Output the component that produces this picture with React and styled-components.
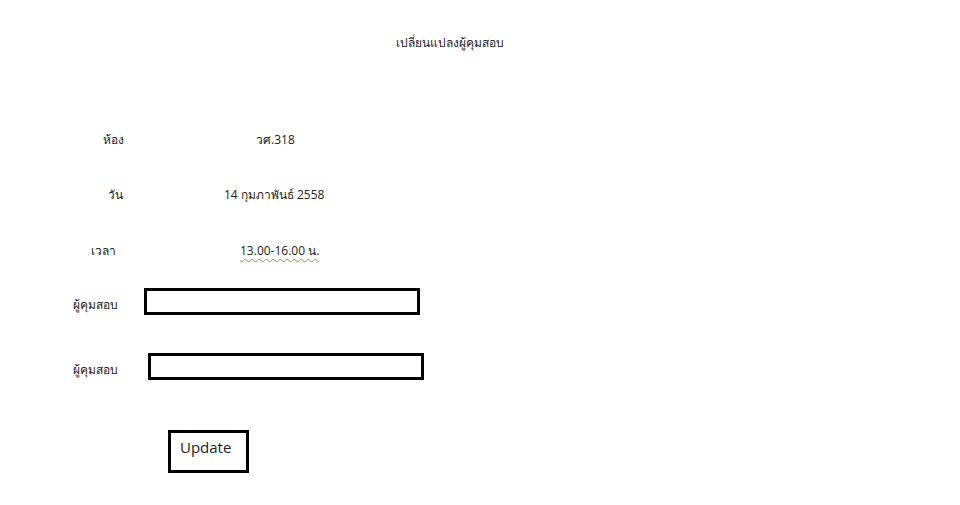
import React from "react";
import styled, { createGlobalStyle } from "styled-components";

const GlobalStyle = createGlobalStyle`
  html, body {
    margin: 0;
    padding: 0;
    background: #ffffff;
  }
  body {
    font-family: "Open Sans", "Noto Sans", "DejaVu Sans", sans-serif;
    color: #222222;
  }
`;

const Page = styled.div`
  width: 960px;
  height: 505px;
  display: flex;
  flex-direction: column;
  overflow: hidden;
`;

const Title = styled.div`
  width: 900px;
  text-align: center;
  font-size: 12px;
  padding-top: 33px;
  margin-bottom: 77px;
`;

const InfoRow = styled.div`
  display: flex;
  align-items: center;
  height: 20px;
  margin-bottom: ${p => p.$gap}px;
`;

const Label = styled.span`
  box-sizing: border-box;
  flex-shrink: 0;
  font-size: 12px;
  width: ${p => p.$w}px;
  padding-left: ${p => p.$x}px;
  white-space: nowrap;
`;

const Value = styled.span`
  font-size: 12px;
  white-space: nowrap;
  ${p => p.$squiggle && `
    text-decoration-line: underline;
    text-decoration-style: wavy;
    text-decoration-color: #6aa84f;
    text-decoration-thickness: 1px;
    text-underline-offset: 3px;
  `}
`;

const FieldRow = styled.div`
  display: flex;
  align-items: center;
  margin-bottom: ${p => p.$gap}px;

  ${Label} {
    padding-top: 6px;
  }
`;

const Box = styled.div`
  flex-shrink: 0;
  width: 270px;
  height: 21px;
  border: 3px solid #000000;
`;

const Button = styled.button`
  margin-left: 168px;
  width: 81px;
  height: 43px;
  border: 3px solid #000000;
  background: #ffffff;
  font-family: "Open Sans", "Noto Sans", sans-serif;
  font-size: 15px;
  color: #222222;
  text-align: left;
  padding: 0 0 9px 9px;
  cursor: pointer;
`;

const App = () => {
  return (
    <Page>
      <GlobalStyle />
      <Title>เปลี่ยนแปลงผู้คุมสอบ</Title>
      <InfoRow $gap={35}>
        <Label $x={103} $w={256}>ห้อง</Label>
        <Value>วศ.318</Value>
      </InfoRow>
      <InfoRow $gap={36}>
        <Label $x={108} $w={224}>วัน</Label>
        <Value>14 กุมภาพันธ์ 2558</Value>
      </InfoRow>
      <InfoRow $gap={28}>
        <Label $x={91} $w={240}>เวลา</Label>
        <Value $squiggle>13.00-16.00 น.</Value>
      </InfoRow>
      <FieldRow $gap={38}>
        <Label $x={73} $w={144}>ผู้คุมสอบ</Label>
        <Box />
      </FieldRow>
      <FieldRow $gap={50}>
        <Label $x={73} $w={148}>ผู้คุมสอบ</Label>
        <Box />
      </FieldRow>
      <Button>Update</Button>
    </Page>
  );
};

export default App;
